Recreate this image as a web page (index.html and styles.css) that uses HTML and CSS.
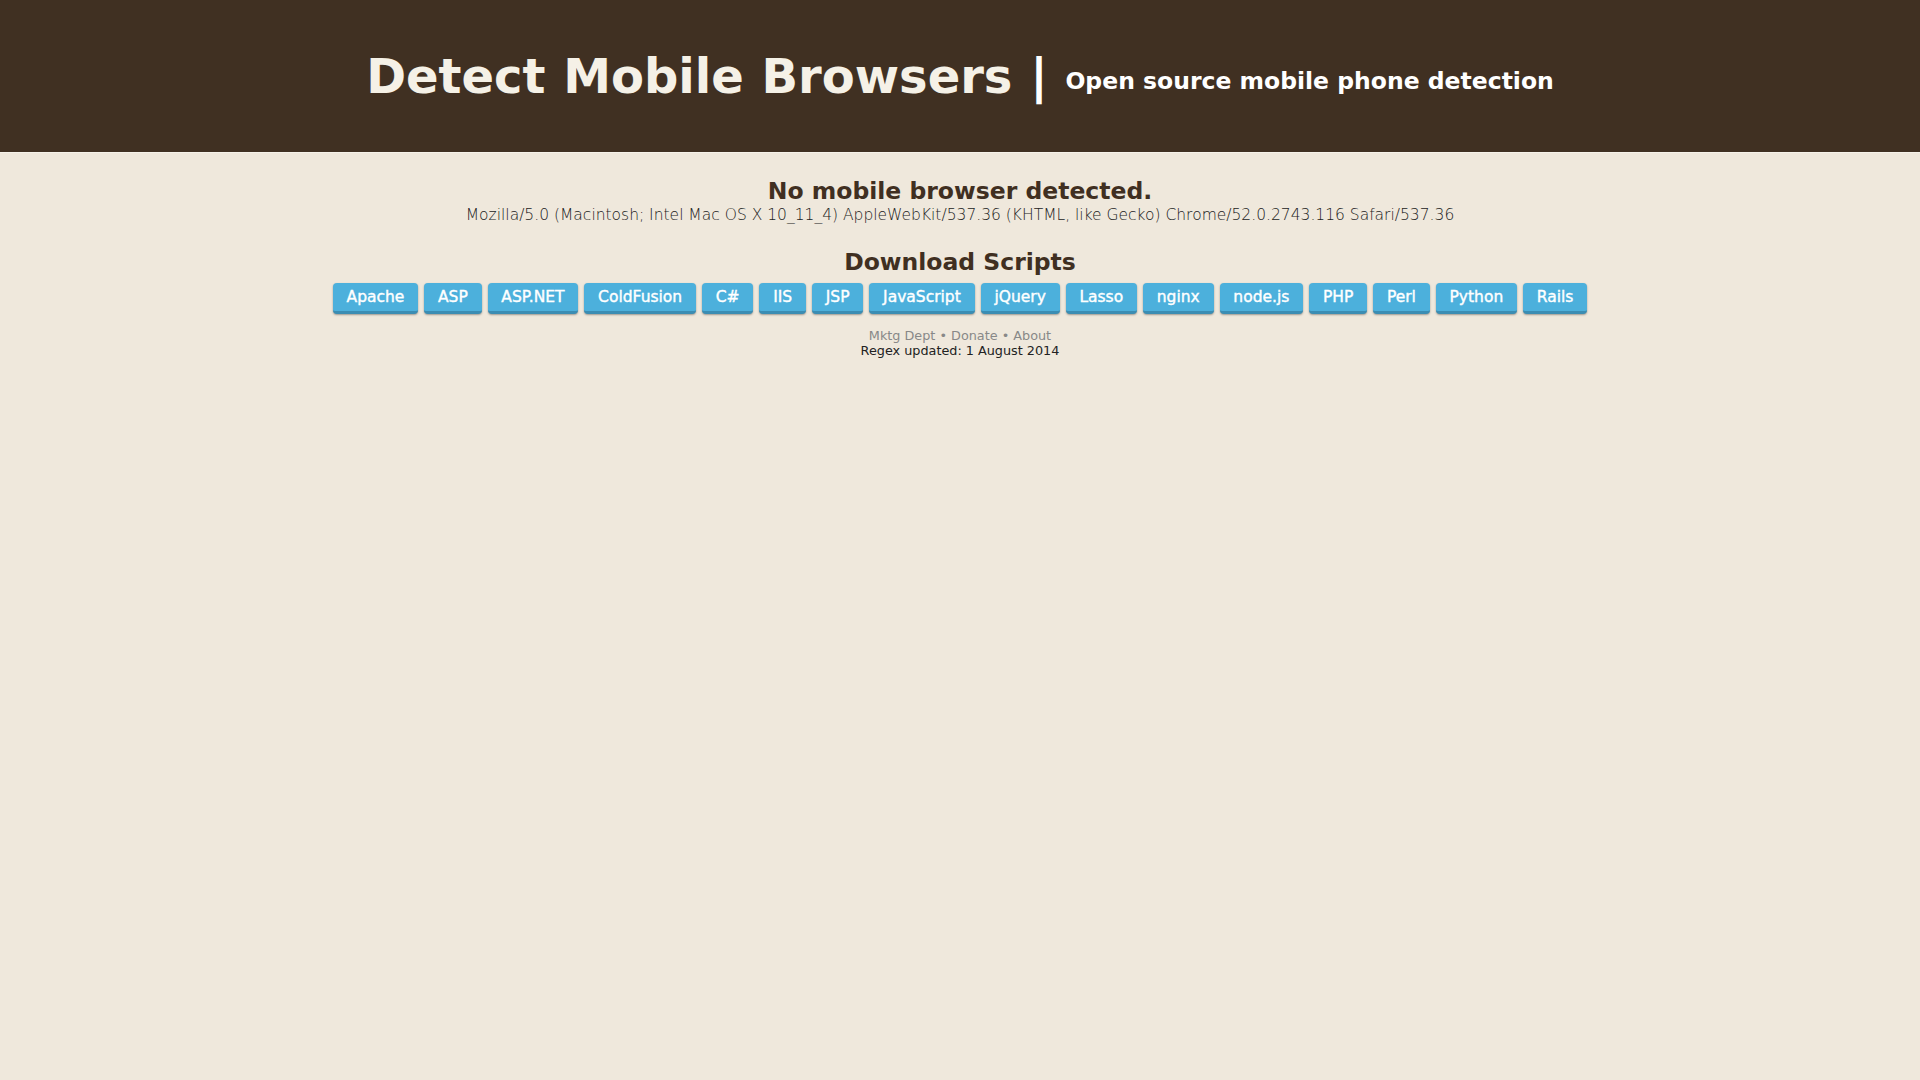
FILE: index.html
```html
<!DOCTYPE html>
<html lang="en">
<head>
<meta charset="utf-8">
<title>Detect Mobile Browsers</title>
<link rel="stylesheet" href="styles.css">
</head>
<body>
<header class="masthead">
  <h1 class="title">Detect Mobile Browsers <span class="sep">|</span> <span class="tagline">Open source mobile phone detection</span></h1>
</header>
<main class="content">
  <h2 class="status">No mobile browser detected.</h2>
  <p class="ua">Mozilla/5.0 (Macintosh; Intel Mac OS X 10_11_4) AppleWebKit/537.36 (KHTML, like Gecko) Chrome/52.0.2743.116 Safari/537.36</p>
  <h2 class="downloads">Download Scripts</h2>
  <nav class="buttons">
    <a class="btn" href="#">Apache</a>
    <a class="btn" href="#">ASP</a>
    <a class="btn" href="#">ASP.NET</a>
    <a class="btn" href="#">ColdFusion</a>
    <a class="btn" href="#">C#</a>
    <a class="btn" href="#">IIS</a>
    <a class="btn" href="#">JSP</a>
    <a class="btn" href="#">JavaScript</a>
    <a class="btn" href="#">jQuery</a>
    <a class="btn" href="#">Lasso</a>
    <a class="btn" href="#">nginx</a>
    <a class="btn" href="#">node.js</a>
    <a class="btn" href="#">PHP</a>
    <a class="btn" href="#">Perl</a>
    <a class="btn" href="#">Python</a>
    <a class="btn" href="#">Rails</a>
  </nav>
  <footer class="foot">
    <div class="links"><a href="#">Mktg Dept</a> &bull; <a href="#">Donate</a> &bull; <a href="#">About</a></div>
    <div class="updated">Regex updated: 1 August 2014</div>
  </footer>
</main>
</body>
</html>
```
FILE: styles.css
```css
html, body {
  margin: 0;
  padding: 0;
}
body {
  background: #efe8dc;
  font-family: "DejaVu Sans", sans-serif;
  color: #222;
}
.masthead {
  background: #403022;
  height: 153px;
  box-sizing: border-box;
  padding-top: 48px;
  border-bottom: 1px solid #f6f2ea;
  text-align: center;
}
.title {
  margin: 0;
  font-size: 48px;
  line-height: 56px;
  font-weight: bold;
  color: #f5f1e7;
  white-space: nowrap;
  word-spacing: 1px;
}
.sep {
  color: #ffffff;
}
.tagline {
  font-size: 23.5px;
  word-spacing: 0;
  color: #ffffff;
  vertical-align: 4px;
}
.content {
  text-align: center;
  padding-top: 24px;
}
.status, .downloads {
  margin: 0;
  font-size: 23.5px;
  line-height: 28px;
  font-weight: bold;
  color: #402f21;
}
.ua {
  margin: 0;
  font-size: 15.5px;
  font-weight: 200;
  line-height: 20px;
  color: #222;
}
.downloads {
  margin-top: 23px;
}
.buttons {
  display: flex;
  justify-content: center;
  gap: 6px;
  margin-top: 7px;
}
.btn {
  display: block;
  background: #4cb0dc;
  color: #fff;
  font-weight: normal;
  font-size: 15.5px;
  line-height: 28px;
  padding: 0 13.8px;
  border-radius: 4px;
  border-bottom: 3px solid #3b8db3;
  box-shadow: 0 1px 2px rgba(0,0,0,0.35);
  -webkit-text-stroke: 0.4px #fff;
  text-decoration: none;
}
.foot {
  margin-top: 14px;
  font-size: 12.8px;
  line-height: 15px;
}
.links, .links a {
  color: #888;
  text-decoration: none;
}
.updated {
  color: #222;
}
```
